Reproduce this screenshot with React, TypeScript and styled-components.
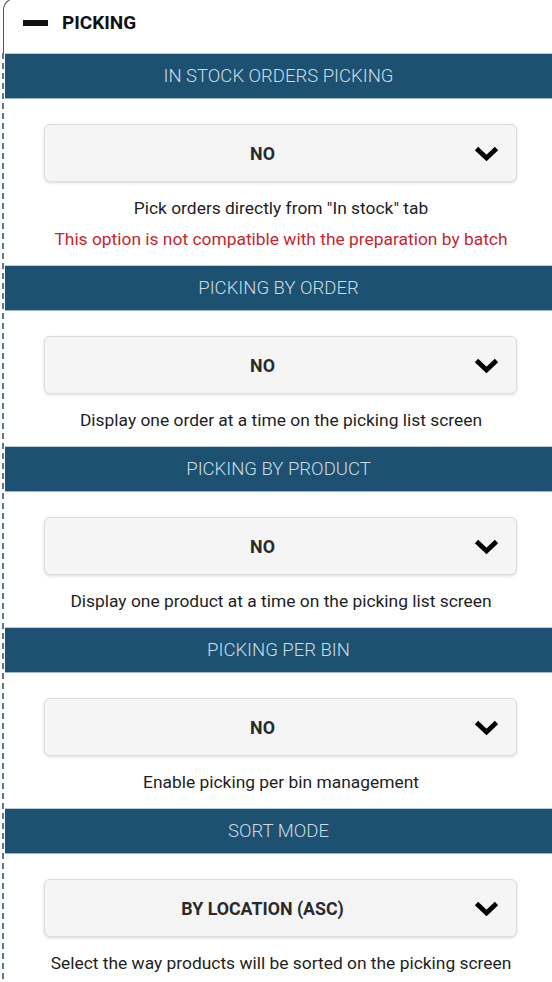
import React from "react";
import styled, { createGlobalStyle } from "styled-components";

const Global = createGlobalStyle`
  html, body { margin: 0; padding: 0; background: #fff; }
  body { font-family: Roboto, "Liberation Sans", sans-serif; width: 552px; height: 982px; overflow: hidden; }
`;

const Page = styled.div`
  padding-left: 2px;
  margin-top: -2px;
`;

const Header = styled.div`
  height: 55px;
  box-sizing: border-box;
  border-top: 1.5px solid #3b586c;
  border-left: 1.5px solid #3b586c;
  border-top-left-radius: 12px;
  margin-left: 1px;
  display: flex;
  align-items: center;
  gap: 14px;
  padding-left: 19px;
  padding-bottom: 7px;
`;

const Minus = styled.span`
  width: 25px;
  height: 6px;
  background: #111;
  display: block;
`;

const Title = styled.span`
  font-weight: 700;
  font-size: 19px;
  color: #111;
`;

const Body = styled.div`
  border-left: 2px dashed #5f7686;
`;

const Section = styled.section`
  display: flex;
  flex-direction: column;
  align-items: stretch;
`;

const Band = styled.div`
  margin-left: 1px;
  height: 46px;
  box-sizing: border-box;
  background: #1c5172;
  border-top: 1px solid #b9ced9;
  border-bottom: 1px solid #9fb6c3;
  color: #cddce4;
  font-weight: 300;
  font-size: 18.5px;
  text-transform: uppercase;
  display: flex;
  align-items: center;
  justify-content: center;
`;

const Content = styled.div`
  padding: 25px 0 14px 0;
  display: flex;
  flex-direction: column;
  align-items: center;
`;

const Select = styled.div`
  align-self: stretch;
  margin: 0 35px 0 40px;
  height: 58px;
  box-sizing: border-box;
  background: #f5f5f5;
  border: 1px solid #dcdcdc;
  border-radius: 6px;
  box-shadow: 0 1px 3px rgba(0, 0, 0, 0.15);
  display: flex;
  align-items: center;
  padding: 0 17px 0 0;
`;

const Value = styled.span`
  flex: 1;
  text-align: center;
  font-weight: 700;
  font-size: 17.8px;
  color: #2a2a2a;
  padding-left: 6px;
`;

const Help = styled.p<{ $warn?: boolean }>`
  margin: ${(p) => (p.$warn ? "7px" : "14px")} 0 0 0;
  line-height: 24px;
  font-size: 17.4px;
  color: ${(p) => (p.$warn ? "#c6262e" : "#1e1e1e")};
  text-align: center;
  padding-left: 6px;
  white-space: nowrap;
`;

const Chevron = () => (
  <svg width="25" height="17" viewBox="0 0 25 17">
    <polyline points="2.5,3.5 12.5,13 22.5,3.5" fill="none" stroke="#000" strokeWidth="4.8" />
  </svg>
);

type Item = { title: string; value: string; help: string; warn?: string };

const items: Item[] = [
  {
    title: "In stock orders picking",
    value: "NO",
    help: 'Pick orders directly from "In stock" tab',
    warn: "This option is not compatible with the preparation by batch",
  },
  { title: "Picking by order", value: "NO", help: "Display one order at a time on the picking list screen" },
  { title: "Picking by product", value: "NO", help: "Display one product at a time on the picking list screen" },
  { title: "Picking per bin", value: "NO", help: "Enable picking per bin management" },
  { title: "Sort mode", value: "BY LOCATION (ASC)", help: "Select the way products will be sorted on the picking screen" },
];

export default function App() {
  return (
    <Page>
      <Global />
      <Header>
        <Minus />
        <Title>PICKING</Title>
      </Header>
      <Body>
        {items.map((it) => (
          <Section key={it.title}>
            <Band>{it.title}</Band>
            <Content>
              <Select>
                <Value>{it.value}</Value>
                <Chevron />
              </Select>
              <Help>{it.help}</Help>
              {it.warn && <Help $warn>{it.warn}</Help>}
            </Content>
          </Section>
        ))}
      </Body>
    </Page>
  );
}
